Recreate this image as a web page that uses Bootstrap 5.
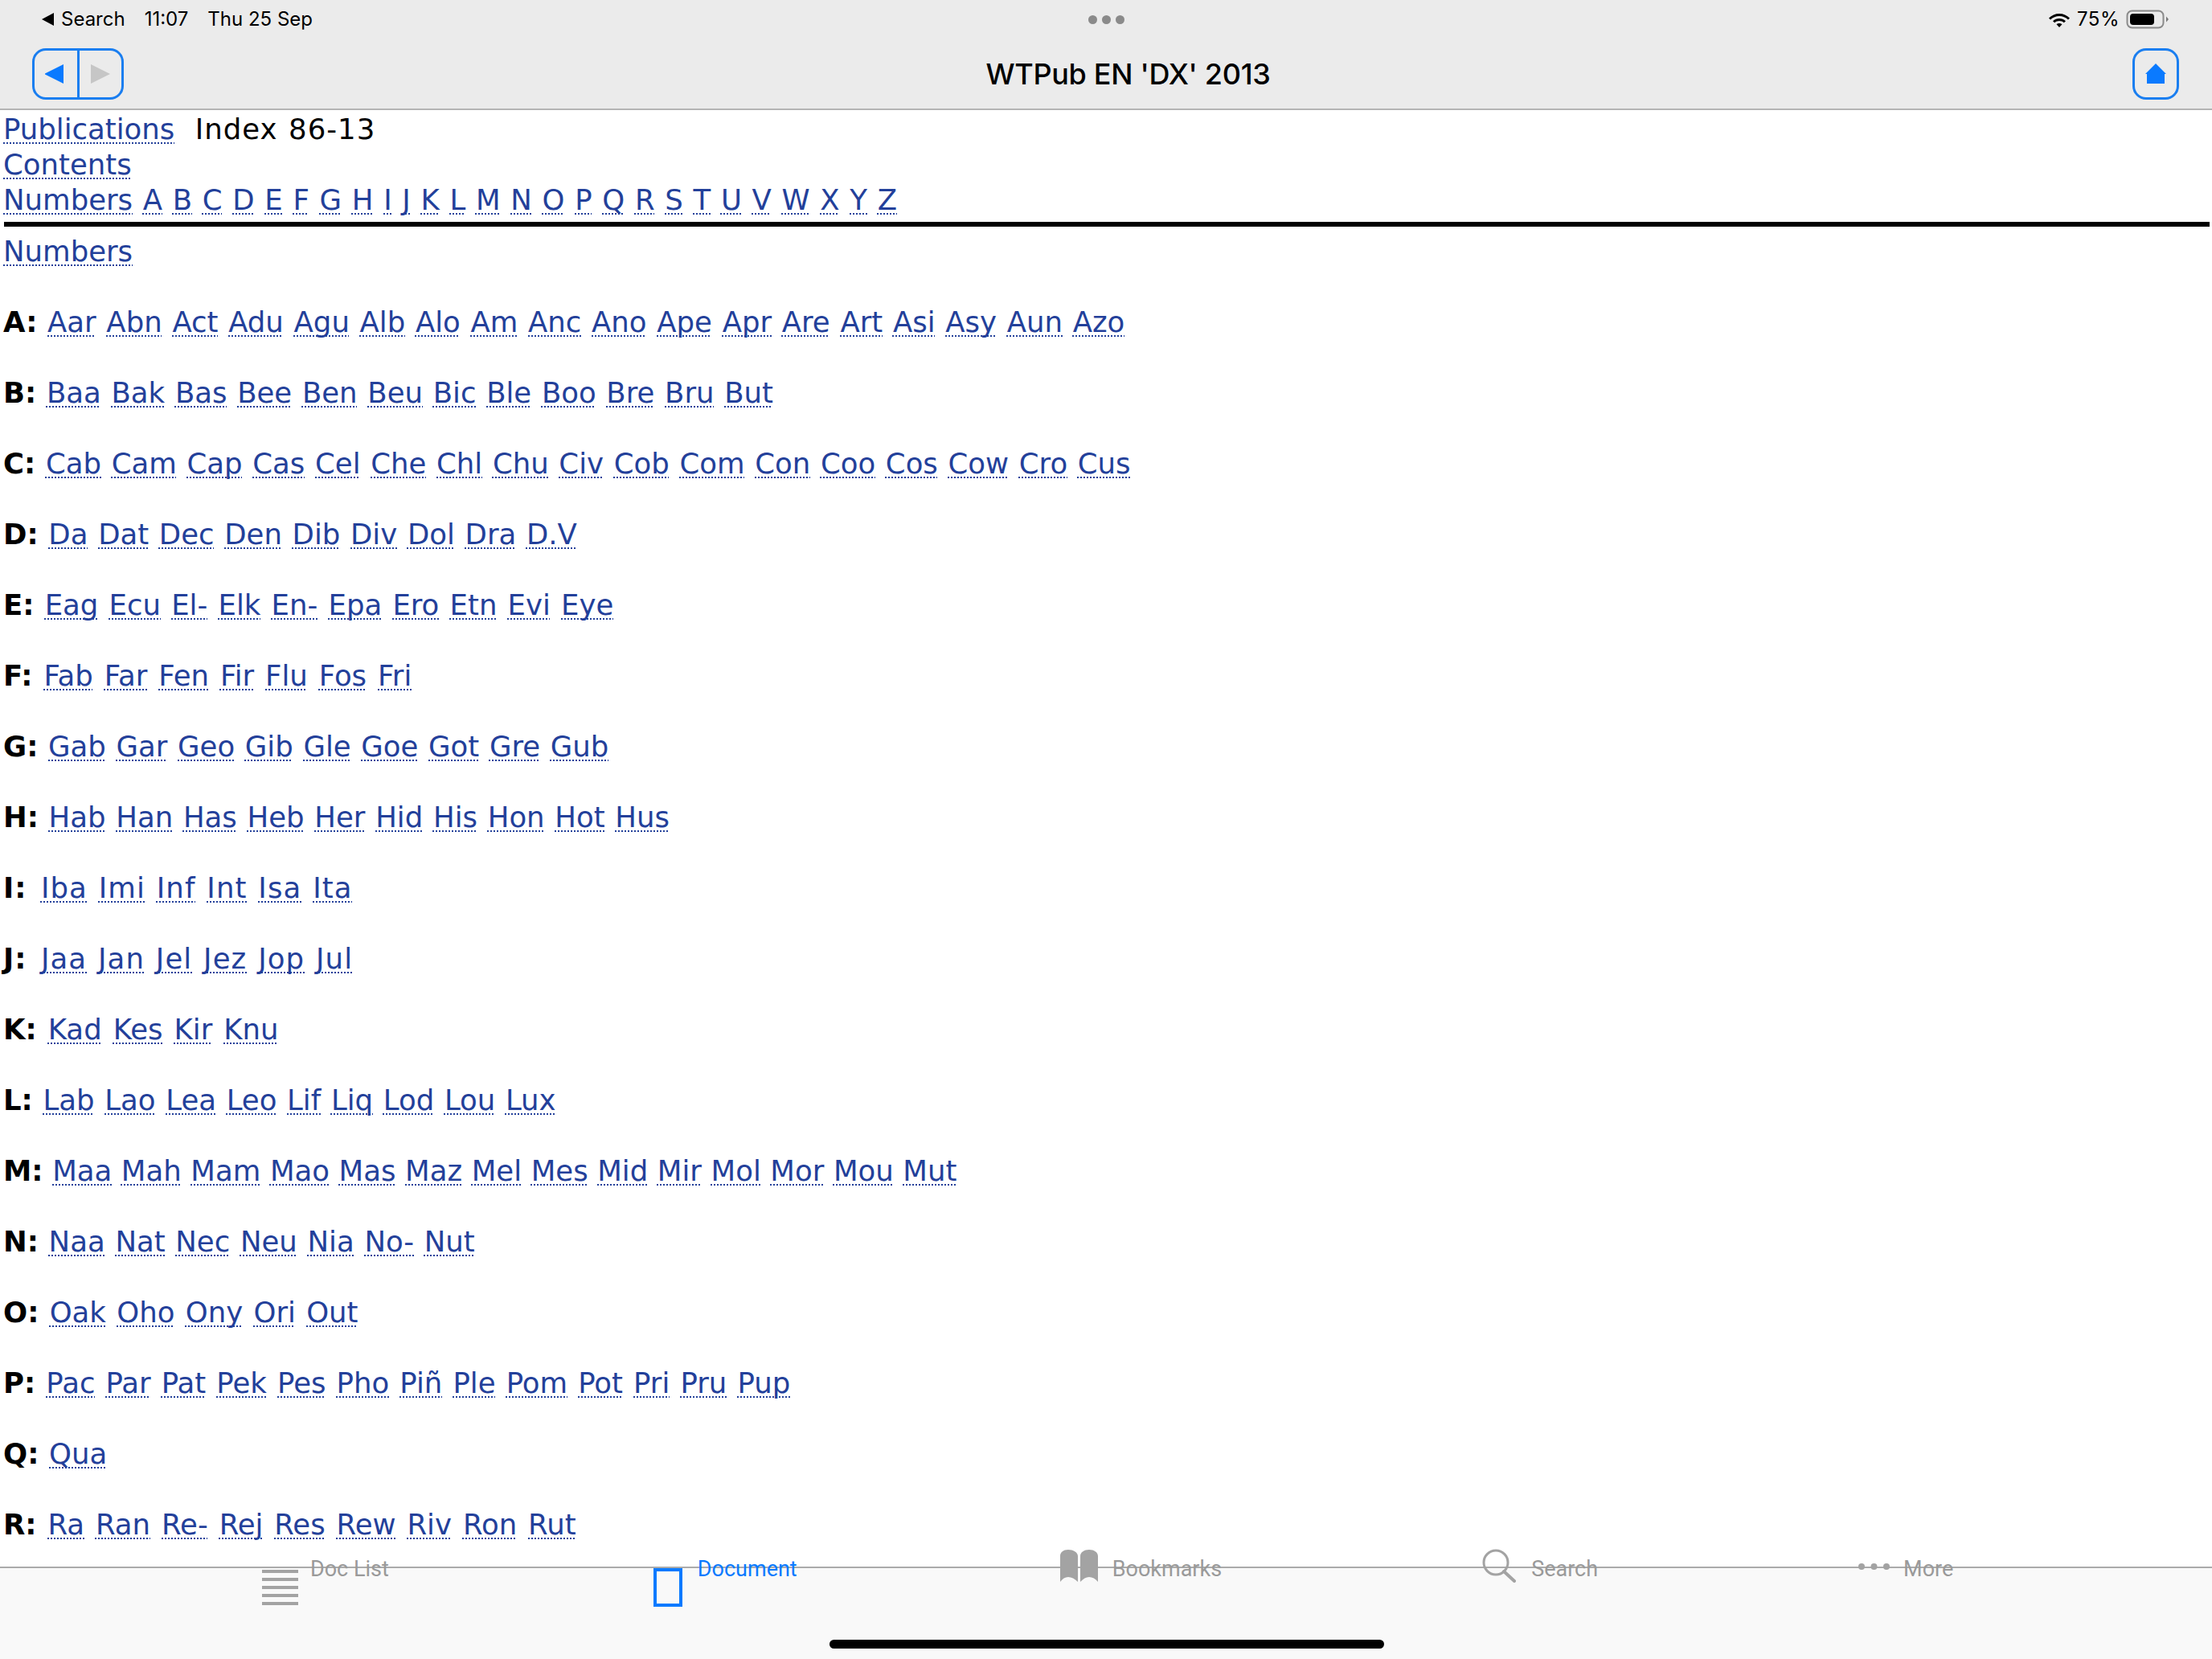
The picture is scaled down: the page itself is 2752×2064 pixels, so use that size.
<!DOCTYPE html>
<html lang="en">
<head>
<meta charset="utf-8">
<title>WTPub EN 'DX' 2013</title>
<link href="https://cdn.jsdelivr.net/npm/bootstrap@5.3.0/dist/css/bootstrap.min.css" rel="stylesheet">
<style>
html,body{height:2064px;overflow:hidden;background:#fff}
.app-shell{height:2064px;font-family:"DejaVu Sans",sans-serif}
.top-chrome{height:137px;background:#ebebeb;border-bottom:2px solid #b4b4b4;font-family:Inter,Roboto,sans-serif;color:#000}
.status-row{height:48px;padding:0 51px 0 52px;font-size:24px;line-height:48px}
.status-side{flex:1 1 0}
.pct-text{letter-spacing:.5px}
.dot-trio{gap:6px}
.dot-trio i{display:block;width:11px;height:11px;border-radius:50%;background:#8a8a8a}
.tool-row{padding:12px 41px 0 40px}
.nav-pair{height:64px;width:114px;border:3px solid #1a7ef0;border-radius:17px;overflow:hidden}
.nav-pair span{flex:1 1 0}
.nav-pair span+span{border-left:3px solid #1a7ef0}
.home-btn{width:58px;height:64px;border:3px solid #1a7ef0;border-radius:17px}
.doc-title{font-size:36px;font-weight:500;line-height:64px;letter-spacing:-.3px}
.doc-body{height:1812px;overflow:hidden;padding:2px 4px 0 4px;font-size:35.5px;line-height:44px;color:#000;word-spacing:1.4px}
.doc-body a{color:#23409a;text-decoration:underline dotted 2px;text-decoration-skip-ink:none;text-underline-offset:4px}
.doc-body p{margin:0 0 44px}
.doc-body b{font-weight:700;color:#000}
.index-label{letter-spacing:1px}
.fit-e{word-spacing:1.9px}
.fit-f,.fit-r{word-spacing:2.6px}
.fit-k{word-spacing:2.7px}
.fit-m{word-spacing:.3px}
.fit-o{word-spacing:2px}
.fit-p{word-spacing:1.8px}
.fit-ij{letter-spacing:1.1px}
.fit-ij b{margin-right:3.5px}
.rule-line{border:0;height:6px;background:#000;opacity:1;margin:5px 0 9px;width:2744px;margin-left:1px}
.tab-strip{height:115px;background:#f9f9f9;border-top:2px solid #ababab;position:relative;font-family:Roboto,sans-serif;font-size:27px;line-height:28px;color:#9a9a9a}
.tab-row{margin-top:-13px;padding-left:326px;gap:326px}
.tab-item{gap:19px}
.tab-item.first-tab{gap:15px}
.tab-item.book-tab{gap:17px}
.tab-item.find-tab{margin-left:-2px}
.tab-item.more-tab{margin-left:-2px;gap:17px}
.tab-item.is-active{color:#0a7aff;margin-left:3px}
.ico-list{margin-top:15px}
.ico-doc{margin-top:13px}
.ico-book{margin-top:-10px}
.ico-find{margin-top:-11px}
.ico-more{margin-top:6px}
.home-bar{position:absolute;left:1032px;top:89px;width:690px;height:11px;border-radius:6px;background:#000}
</style>
</head>
<body>
<div class="app-shell d-flex flex-column">
  <header class="top-chrome">
    <div class="status-row d-flex align-items-center">
      <div class="status-side d-flex align-items-center">
        <svg width="16" height="16" viewBox="0 0 16 16" class="me-2"><path d="M0 8 15 0V16Z" fill="#000"/></svg>
        <span>Search</span><span class="ms-4">11:07</span><span class="ms-4">Thu 25 Sep</span>
      </div>
      <div class="dot-trio d-flex justify-content-center"><i></i><i></i><i></i></div>
      <div class="status-side d-flex align-items-center justify-content-end">
        <svg width="28" height="22" viewBox="0 0 28 22" class="me-2"><path d="M14 4C9 4 4.500 6 1 9.500L3 11.500C6 8.500 10 7 14 7S22 8.500 25 11.500L27 9.500C23.500 6 19 4 14 4ZM14 10C11 10 8.300 11 6 13.300L8.200 15.300C9.800 13.800 11.800 13 14 13S18.200 13.800 19.800 15.300L22 13.300C19.700 11 17 10 14 10ZM14 16C12.800 16 11.600 16.400 10.500 17.300L14 21 17.500 17.300C16.400 16.400 15.200 16 14 16Z" fill="#000"/></svg>
        <span class="pct-text">75%</span>
        <svg width="56" height="24" viewBox="0 0 56 24" class="ms-2"><rect x="1.500" y="1.500" width="45" height="21" rx="6" fill="none" stroke="#8a8a8a" stroke-width="2"/><rect x="5" y="5" width="30" height="14" rx="4" fill="#000"/><path d="M50 8.500 53 12 50 15.500Z" fill="#777"/></svg>
      </div>
    </div>
    <div class="tool-row d-flex justify-content-between align-items-start">
      <div class="nav-pair d-flex">
        <span class="d-flex align-items-center justify-content-center"><svg width="26" height="26" viewBox="2 0 26 26"><path d="M1 13 25 1V25Z" fill="#0a7aff"/></svg></span>
        <span class="d-flex align-items-center justify-content-center"><svg width="26" height="26" viewBox="0 0 26 26"><path d="M25 13 1 1V25Z" fill="#c6c6c6"/></svg></span>
      </div>
      <div class="doc-title">WTPub EN 'DX' 2013</div>
      <div class="home-btn d-flex align-items-center justify-content-center">
        <svg width="28" height="28" viewBox="0 0 28 28"><path d="M14 1 27 14H25V26H3V14H1Z" fill="#0a7aff"/></svg>
      </div>
    </div>
  </header>

  <main class="doc-body">
    <div><a href="#">Publications</a>&nbsp; <span class="index-label">Index 86-13</span></div>
    <div><a href="#">Contents</a></div>
    <div><a href="#">Numbers</a> <a href="#">A</a> <a href="#">B</a> <a href="#">C</a> <a href="#">D</a> <a href="#">E</a> <a href="#">F</a> <a href="#">G</a> <a href="#">H</a> <a href="#">I</a> <a href="#">J</a> <a href="#">K</a> <a href="#">L</a> <a href="#">M</a> <a href="#">N</a> <a href="#">O</a> <a href="#">P</a> <a href="#">Q</a> <a href="#">R</a> <a href="#">S</a> <a href="#">T</a> <a href="#">U</a> <a href="#">V</a> <a href="#">W</a> <a href="#">X</a> <a href="#">Y</a> <a href="#">Z</a></div>
    <hr class="rule-line">
    <p><a href="#">Numbers</a></p>
    <p><b>A:</b> <a href="#">Aar</a> <a href="#">Abn</a> <a href="#">Act</a> <a href="#">Adu</a> <a href="#">Agu</a> <a href="#">Alb</a> <a href="#">Alo</a> <a href="#">Am</a> <a href="#">Anc</a> <a href="#">Ano</a> <a href="#">Ape</a> <a href="#">Apr</a> <a href="#">Are</a> <a href="#">Art</a> <a href="#">Asi</a> <a href="#">Asy</a> <a href="#">Aun</a> <a href="#">Azo</a></p>
    <p><b>B:</b> <a href="#">Baa</a> <a href="#">Bak</a> <a href="#">Bas</a> <a href="#">Bee</a> <a href="#">Ben</a> <a href="#">Beu</a> <a href="#">Bic</a> <a href="#">Ble</a> <a href="#">Boo</a> <a href="#">Bre</a> <a href="#">Bru</a> <a href="#">But</a></p>
    <p><b>C:</b> <a href="#">Cab</a> <a href="#">Cam</a> <a href="#">Cap</a> <a href="#">Cas</a> <a href="#">Cel</a> <a href="#">Che</a> <a href="#">Chl</a> <a href="#">Chu</a> <a href="#">Civ</a> <a href="#">Cob</a> <a href="#">Com</a> <a href="#">Con</a> <a href="#">Coo</a> <a href="#">Cos</a> <a href="#">Cow</a> <a href="#">Cro</a> <a href="#">Cus</a></p>
    <p><b>D:</b> <a href="#">Da</a> <a href="#">Dat</a> <a href="#">Dec</a> <a href="#">Den</a> <a href="#">Dib</a> <a href="#">Div</a> <a href="#">Dol</a> <a href="#">Dra</a> <a href="#">D.V</a></p>
    <p class="fit-e"><b>E:</b> <a href="#">Eag</a> <a href="#">Ecu</a> <a href="#">El-</a> <a href="#">Elk</a> <a href="#">En-</a> <a href="#">Epa</a> <a href="#">Ero</a> <a href="#">Etn</a> <a href="#">Evi</a> <a href="#">Eye</a></p>
    <p class="fit-f"><b>F:</b> <a href="#">Fab</a> <a href="#">Far</a> <a href="#">Fen</a> <a href="#">Fir</a> <a href="#">Flu</a> <a href="#">Fos</a> <a href="#">Fri</a></p>
    <p><b>G:</b> <a href="#">Gab</a> <a href="#">Gar</a> <a href="#">Geo</a> <a href="#">Gib</a> <a href="#">Gle</a> <a href="#">Goe</a> <a href="#">Got</a> <a href="#">Gre</a> <a href="#">Gub</a></p>
    <p><b>H:</b> <a href="#">Hab</a> <a href="#">Han</a> <a href="#">Has</a> <a href="#">Heb</a> <a href="#">Her</a> <a href="#">Hid</a> <a href="#">His</a> <a href="#">Hon</a> <a href="#">Hot</a> <a href="#">Hus</a></p>
    <p class="fit-ij"><b>I:</b> <a href="#">Iba</a> <a href="#">Imi</a> <a href="#">Inf</a> <a href="#">Int</a> <a href="#">Isa</a> <a href="#">Ita</a></p>
    <p class="fit-ij"><b>J:</b> <a href="#">Jaa</a> <a href="#">Jan</a> <a href="#">Jel</a> <a href="#">Jez</a> <a href="#">Jop</a> <a href="#">Jul</a></p>
    <p class="fit-k"><b>K:</b> <a href="#">Kad</a> <a href="#">Kes</a> <a href="#">Kir</a> <a href="#">Knu</a></p>
    <p><b>L:</b> <a href="#">Lab</a> <a href="#">Lao</a> <a href="#">Lea</a> <a href="#">Leo</a> <a href="#">Lif</a> <a href="#">Liq</a> <a href="#">Lod</a> <a href="#">Lou</a> <a href="#">Lux</a></p>
    <p class="fit-m"><b>M:</b> <a href="#">Maa</a> <a href="#">Mah</a> <a href="#">Mam</a> <a href="#">Mao</a> <a href="#">Mas</a> <a href="#">Maz</a> <a href="#">Mel</a> <a href="#">Mes</a> <a href="#">Mid</a> <a href="#">Mir</a> <a href="#">Mol</a> <a href="#">Mor</a> <a href="#">Mou</a> <a href="#">Mut</a></p>
    <p><b>N:</b> <a href="#">Naa</a> <a href="#">Nat</a> <a href="#">Nec</a> <a href="#">Neu</a> <a href="#">Nia</a> <a href="#">No-</a> <a href="#">Nut</a></p>
    <p class="fit-o"><b>O:</b> <a href="#">Oak</a> <a href="#">Oho</a> <a href="#">Ony</a> <a href="#">Ori</a> <a href="#">Out</a></p>
    <p class="fit-p"><b>P:</b> <a href="#">Pac</a> <a href="#">Par</a> <a href="#">Pat</a> <a href="#">Pek</a> <a href="#">Pes</a> <a href="#">Pho</a> <a href="#">Piñ</a> <a href="#">Ple</a> <a href="#">Pom</a> <a href="#">Pot</a> <a href="#">Pri</a> <a href="#">Pru</a> <a href="#">Pup</a></p>
    <p><b>Q:</b> <a href="#">Qua</a></p>
    <p class="fit-r"><b>R:</b> <a href="#">Ra</a> <a href="#">Ran</a> <a href="#">Re-</a> <a href="#">Rej</a> <a href="#">Res</a> <a href="#">Rew</a> <a href="#">Riv</a> <a href="#">Ron</a> <a href="#">Rut</a></p>
  </main>

  <footer class="tab-strip">
    <div class="tab-row d-flex align-items-start">
      <div class="tab-item first-tab d-flex align-items-start">
        <svg class="ico-list" width="45" height="44" viewBox="0 0 45 44"><path d="M0 0H45V4H0ZM0 10H45V14H0ZM0 20H45V24H0ZM0 30H45V34H0ZM0 40H45V44H0Z" fill="#a3a3a3"/></svg>
        <span>Doc List</span>
      </div>
      <div class="tab-item is-active d-flex align-items-start">
        <svg class="ico-doc" width="36" height="48" viewBox="0 0 36 48"><rect x="2" y="2" width="32" height="44" fill="none" stroke="#0a7aff" stroke-width="4"/></svg>
        <span>Document</span>
      </div>
      <div class="tab-item book-tab d-flex align-items-start">
        <svg class="ico-book" width="49" height="40" viewBox="0 0 49 40"><path d="M1 8C1 3 5 0 11 0S23 3 23 8V40C19 36 15 34 11 34S4 36 1 40ZM26 8C26 3 31 0 37 0S48 3 48 8V40C45 36 41 34 37 34S30 36 26 40Z" fill="#a3a3a3"/></svg>
        <span>Bookmarks</span>
      </div>
      <div class="tab-item find-tab d-flex align-items-start">
        <svg class="ico-find" width="42" height="42" viewBox="0 0 42 42"><circle cx="17" cy="17" r="15" fill="none" stroke="#a3a3a3" stroke-width="3"/><path d="M27 28 40 40" stroke="#a3a3a3" stroke-width="4" stroke-linecap="round"/></svg>
        <span>Search</span>
      </div>
      <div class="tab-item more-tab d-flex align-items-start">
        <svg class="ico-more" width="39" height="10" viewBox="0 0 39 10"><circle cx="4" cy="5" r="4" fill="#a3a3a3"/><circle cx="19.500" cy="5" r="4" fill="#a3a3a3"/><circle cx="35" cy="5" r="4" fill="#a3a3a3"/></svg>
        <span>More</span>
      </div>
    </div>
    <div class="home-bar"></div>
  </footer>
</div>
<script src="https://cdn.jsdelivr.net/npm/bootstrap@5.3.0/dist/js/bootstrap.bundle.min.js"></script>
</body>
</html>
